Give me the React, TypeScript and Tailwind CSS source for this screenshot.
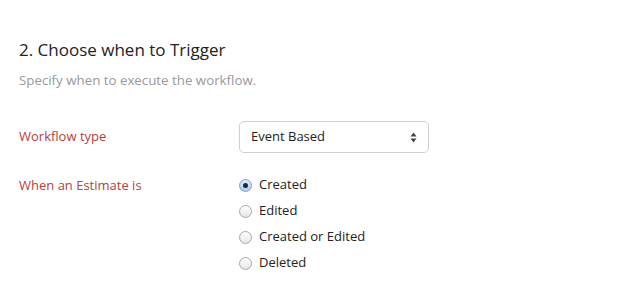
import React from "react";

const font = { fontFamily: '"Open Sans", "Lato", sans-serif' };

function Radio({ checked, label }: { checked?: boolean; label: string }) {
  return (
    <div className="flex items-center h-[26px]">
      <span
        className={
          "w-[13px] h-[13px] rounded-full border flex items-center justify-center " +
          (checked
            ? "border-[#7aa0d6] bg-gradient-to-b from-[#dfeaf8] to-[#b6cdee]"
            : "border-[#a8a8a8] bg-gradient-to-b from-[#ffffff] to-[#e6e6e6]")
        }
      >
        {checked && <span className="w-[5px] h-[5px] rounded-full bg-[#1d2a3c]" />}
      </span>
      <span className="ml-[7px] text-[13px] text-[#222]">{label}</span>
    </div>
  );
}

export default function App() {
  return (
    <div className="w-[618px] h-[293px] bg-white" style={font}>
      <div className="pl-[19px] pt-[38px]">
        <h2 className="text-[17px] leading-[24px] text-[#222]">2. Choose when to Trigger</h2>
        <p className="mt-[9px] text-[13.3px] leading-[18px] text-[#999]">Specify when to execute the workflow.</p>

        <div className="mt-[32px] flex items-center">
          <div className="w-[220px] text-[13px] text-[#b8403b]">Workflow type</div>
          <div className="w-[190px] h-[32px] border border-[#cfcfcf] rounded-[5px] flex items-center justify-between px-[11px]">
            <span className="text-[13px] text-[#222]">Event Based</span>
            <svg width="7" height="11" viewBox="0 0 7 11">
              <path d="M3.5 0.5 L6.5 4.5 L0.5 4.5 Z" fill="#444" />
              <path d="M3.5 10.5 L6.5 6.5 L0.5 6.5 Z" fill="#444" />
            </svg>
          </div>
        </div>

        <div className="mt-[19px] flex">
          <div className="w-[220px] text-[13px] text-[#b8403b] leading-[26px]">When an Estimate is</div>
          <div className="flex flex-col">
            <Radio checked label="Created" />
            <Radio label="Edited" />
            <Radio label="Created or Edited" />
            <Radio label="Deleted" />
          </div>
        </div>
      </div>
    </div>
  );
}
